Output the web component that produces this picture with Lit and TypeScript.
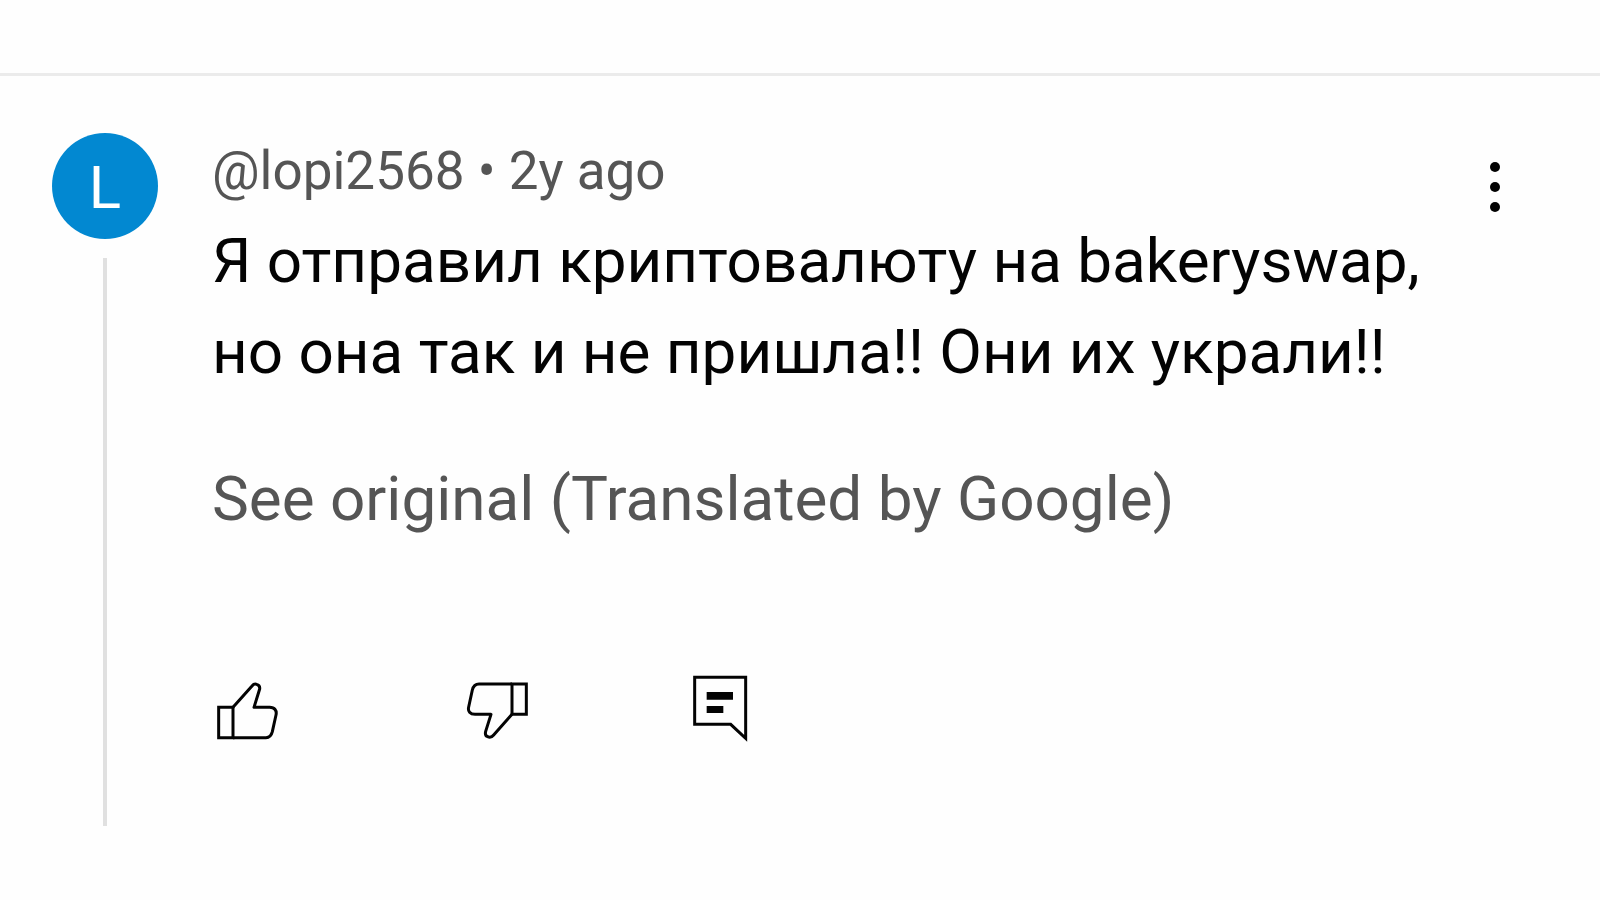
import { LitElement, html, css } from "lit";
import { customElement, property } from "lit/decorators.js";

@customElement("comment-actions")
class CommentActions extends LitElement {
  static styles = css`
    :host {
      display: block;
    }
    .actions {
      display: grid;
      grid-template-columns: 250px 220px auto;
      justify-content: start;
    }
    .action {
      display: flex;
      width: 68px;
      padding: 0;
      border: 0;
      background: none;
      color: #030303;
      cursor: pointer;
    }
    .icon {
      display: block;
      width: 68px;
      height: 74px;
      fill: none;
      stroke: currentColor;
      stroke-width: 9;
      stroke-linejoin: round;
    }
    .sharp {
      stroke-linejoin: miter;
    }
    .solid {
      fill: currentColor;
      stroke: none;
    }
  `;

  render() {
    return html`
      <div class="actions">
        <button class="action" type="button" aria-label="Like">
          <svg class="icon" viewBox="36 30 204 222" aria-hidden="true">
            <path class="sharp" d="M56 139H99V230H56Z" />
            <path
              d="M99 139L156 75C161 69 165 68 170 70C177 72 180 77 179 84L162 139H209C224 139 231 149 228 162L217 212C214 224 209 230 198 230H99"
            />
          </svg>
        </button>
        <button class="action" type="button" aria-label="Dislike">
          <svg class="icon" viewBox="36 30 204 222" aria-hidden="true">
            <path class="sharp" d="M186 69H229V160H186Z" />
            <path
              d="M186 160L131 222C126 228 119 230 113 227C107 225 105 219 107 211L123 160H75C60 160 53 151 56 138L67 87C70 75 76 69 87 69H186"
            />
          </svg>
        </button>
        <button class="action" type="button" aria-label="Reply">
          <svg class="icon" viewBox="36 30 204 222" aria-hidden="true">
            <path class="sharp" d="M74 49H227V232L182 190H74Z" />
            <path class="solid" d="M110 93H189V116H110ZM110 135H160V156H110Z" />
          </svg>
        </button>
      </div>
    `;
  }
}

@customElement("comment-thread")
class CommentThread extends LitElement {
  @property() initial = "";
  @property() author = "";
  @property() age = "";
  @property() text = "";

  static styles = css`
    :host {
      display: block;
    }
    .comment {
      display: grid;
      grid-template-columns: 106px minmax(0, 1fr) 106px;
      padding: 57px 52px 0;
    }
    .rail {
      display: flex;
      flex-direction: column;
      align-items: center;
      gap: 19px;
    }
    .avatar {
      display: flex;
      align-items: center;
      justify-content: center;
      box-sizing: border-box;
      width: 106px;
      height: 106px;
      padding-top: 4px;
      border-radius: 50%;
      background: #0288d1;
      color: #fff;
      font-size: 60px;
      line-height: 60px;
      text-decoration: none;
    }
    .thread {
      flex: 1;
      width: 4px;
      background: #e0e0e0;
    }
    .body {
      padding: 7px 0 81px 54px;
    }
    .meta {
      color: #555;
      font-size: 53px;
      line-height: 62px;
    }
    .author {
      color: inherit;
      text-decoration: none;
    }
    .text {
      margin: 13px 0 56px;
      color: #030303;
      font-size: 62px;
      line-height: 91px;
    }
    .translate {
      display: block;
      margin-bottom: 127px;
      padding: 0;
      border: 0;
      background: none;
      color: #555;
      font: inherit;
      font-size: 62px;
      line-height: 91px;
      text-align: left;
      cursor: pointer;
    }
    .menu {
      display: flex;
      align-items: center;
      justify-content: center;
      height: 108px;
      padding: 0;
      border: 0;
      background: none;
      color: #030303;
      cursor: pointer;
    }
    .dots {
      display: block;
      width: 12px;
      height: 54px;
      fill: currentColor;
    }
  `;

  render() {
    return html`
      <article class="comment">
        <div class="rail">
          <a class="avatar" href="#channel" aria-label=${this.author}>${this.initial}</a>
          <div class="thread"></div>
        </div>
        <div class="body">
          <div class="meta">
            <a class="author" href="#channel">${this.author}</a> • <time>${this.age}</time>
          </div>
          <p class="text">${this.text}</p>
          <button class="translate" type="button">See original (Translated by Google)</button>
          <comment-actions></comment-actions>
        </div>
        <button class="menu" type="button" aria-label="More options">
          <svg class="dots" viewBox="0 0 12 54" aria-hidden="true">
            <circle cx="6" cy="7" r="5" />
            <circle cx="6" cy="27" r="5" />
            <circle cx="6" cy="47" r="5" />
          </svg>
        </button>
      </article>
    `;
  }
}

@customElement("app-root")
class AppRoot extends LitElement {
  static styles = css`
    :host {
      display: block;
      min-height: 100vh;
      background: #fefefe;
      font-family: Roboto, "Noto Sans", sans-serif;
    }
    .comments {
      padding-top: 73px;
    }
    .divider {
      height: 3px;
      margin: 0;
      border: 0;
      background: #ebebeb;
    }
  `;

  render() {
    return html`
      <main class="comments">
        <hr class="divider" />
        <comment-thread
          initial="L"
          author="@lopi2568"
          age="2y ago"
          text="Я отправил криптовалюту на bakeryswap, но она так и не пришла!! Они их украли!!"
        ></comment-thread>
      </main>
    `;
  }
}
